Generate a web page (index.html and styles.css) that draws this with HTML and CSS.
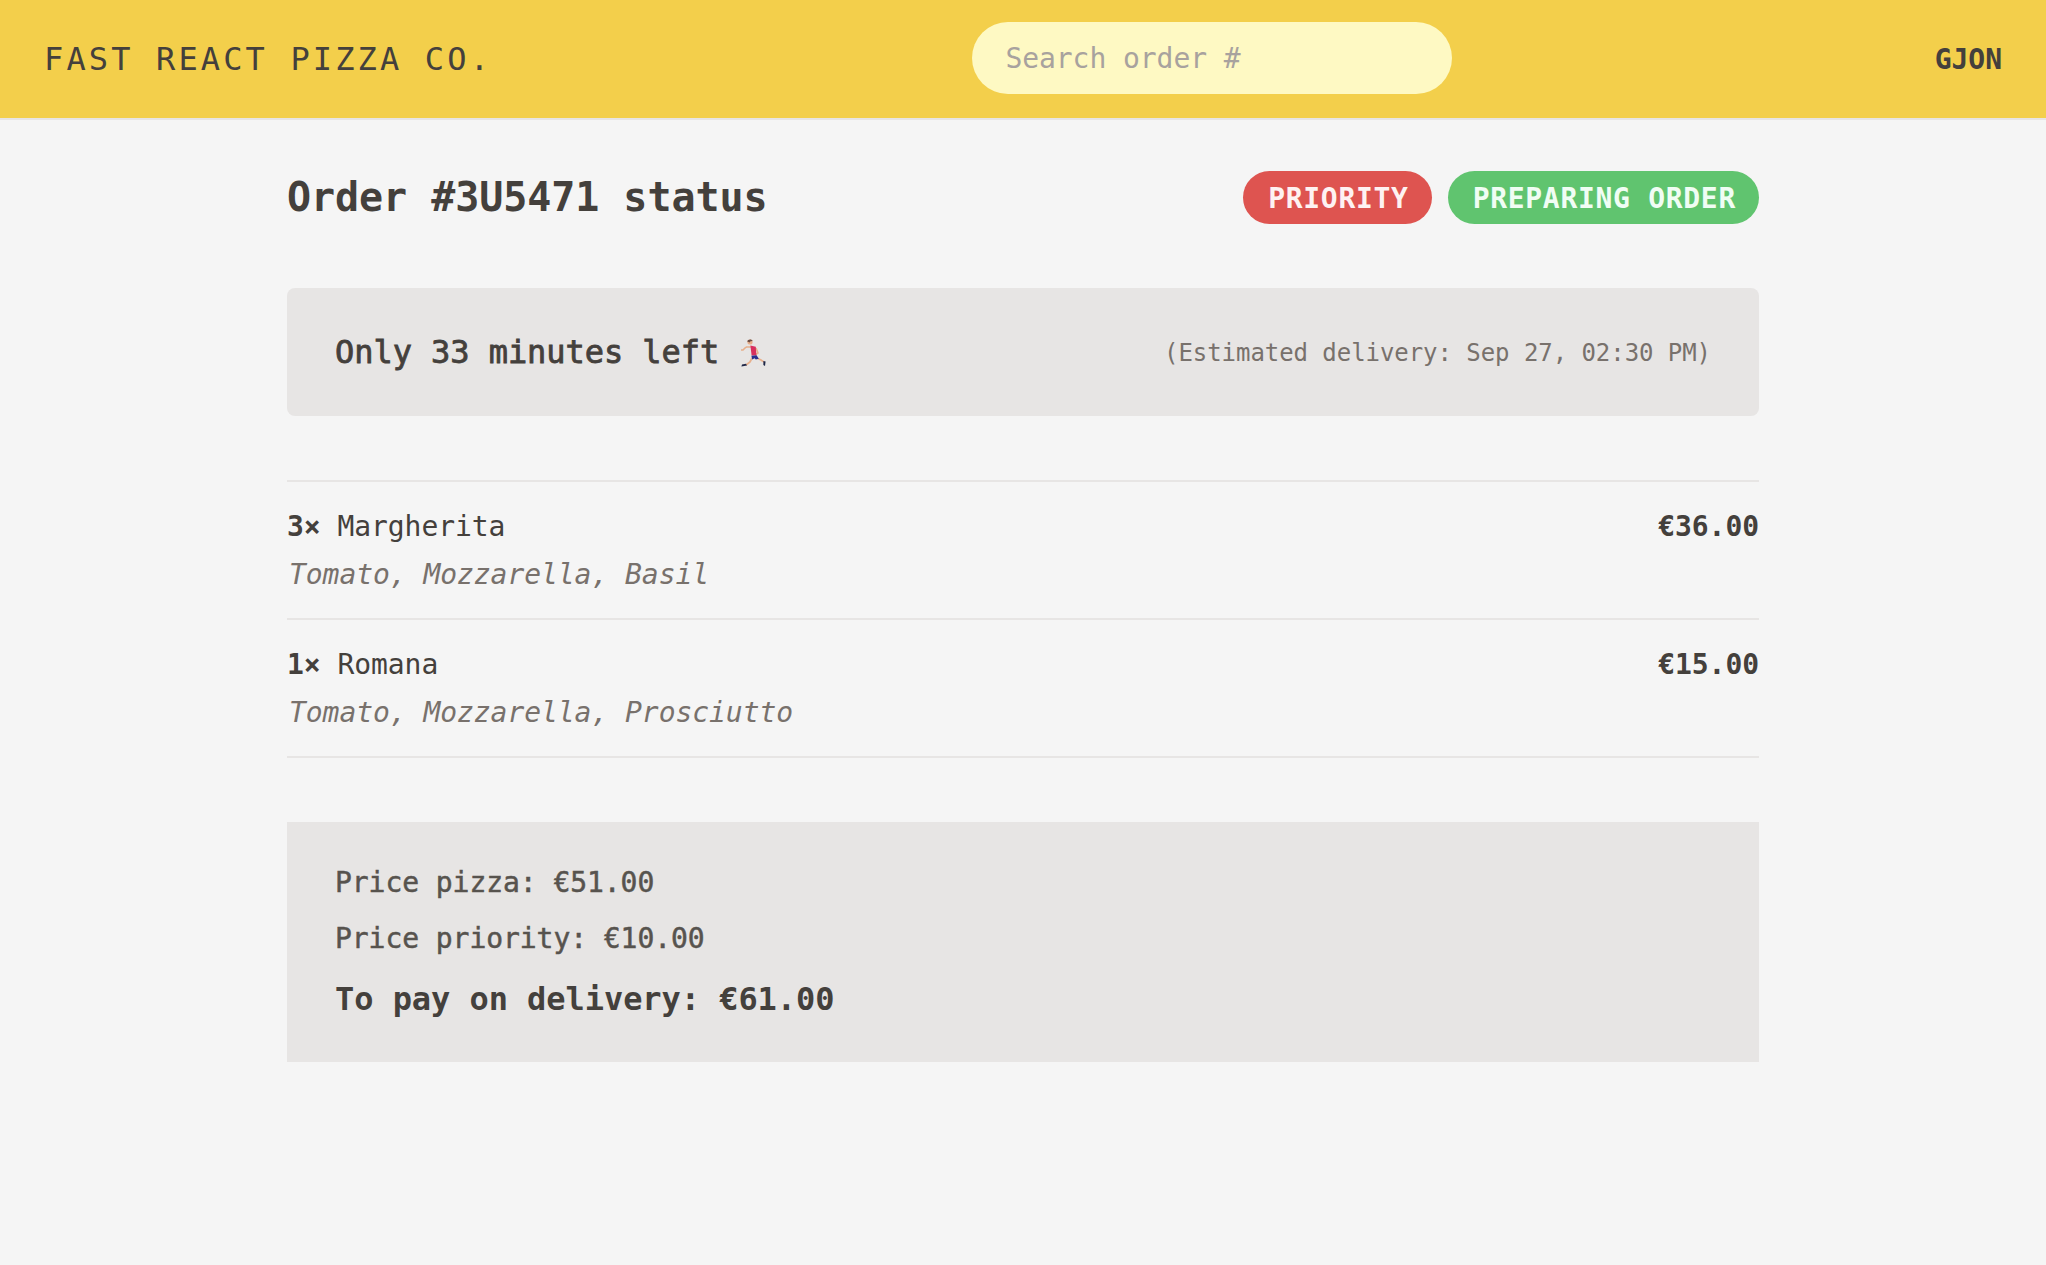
FILE: index.html
```html
<!DOCTYPE html>
<html lang="en">
<head>
    <meta charset="UTF-8">
    <meta name="viewport" content="width=device-width, initial-scale=1.0">
    <title>Fast React Pizza Co.</title>
    <link rel="stylesheet" href="styles.css">
</head>
<body>
    <header class="header">
        <a class="logo" href="#">Fast React Pizza Co.</a>
        <input class="search" type="text" placeholder="Search order #">
        <span class="username">Gjon</span>
    </header>

    <main class="order">
        <div class="order-title">
            <h2>Order #3U5471 status</h2>
            <div class="badges">
                <span class="badge badge-red">Priority</span>
                <span class="badge badge-green">Preparing order</span>
            </div>
        </div>

        <div class="panel eta">
            <p class="eta-left">Only 33 minutes left
                <svg class="runner" viewBox="0 0 28 30" aria-hidden="true">
                    <path d="M8 9l-3 3-2 0M13 9l-5 0" fill="none" stroke="#e8b08c" stroke-width="1.6"/>
                    <path d="M18 10l2 5-3 2" fill="none" stroke="#e8b08c" stroke-width="1.6"/>
                    <path d="M14 20l-2 4-4 3" fill="none" stroke="#e8b08c" stroke-width="1.8"/>
                    <path d="M19 20l4 2 3 2" fill="none" stroke="#e8b08c" stroke-width="1.6"/>
                    <circle cx="12" cy="4" r="2.6" fill="#e8b08c"/>
                    <path d="M9.2 3.6c.2-2.4 4.6-3.2 5.6-.6l-2.4.2-.6 1.2z" fill="#6d4c41"/>
                    <path d="M12.4 7.6l5.4 1.2.6 8.4-4.8.4z" fill="#d8305f"/>
                    <path d="M13.4 17.8l5.2-.6 2.2 3.6-3 .6-1.2-1.2-2.4 1.4z" fill="#2a2f8f"/>
                    <path d="M4 26.6l4-.8 1 1.8-5.6.8z" fill="#1f2747"/>
                    <path d="M25.4 23l2.2.4-.6 4.6-1.6-1z" fill="#1f2747"/>
                </svg>
            </p>
            <p class="eta-note">(Estimated delivery: Sep 27, 02:30 PM)</p>
        </div>

        <ul class="items">
            <li class="item">
                <div class="item-row">
                    <p class="item-name"><b>3×</b> Margherita</p>
                    <p class="item-price">€36.00</p>
                </div>
                <p class="item-ingredients">Tomato, Mozzarella, Basil</p>
            </li>
            <li class="item">
                <div class="item-row">
                    <p class="item-name"><b>1×</b> Romana</p>
                    <p class="item-price">€15.00</p>
                </div>
                <p class="item-ingredients">Tomato, Mozzarella, Prosciutto</p>
            </li>
        </ul>

        <div class="panel summary">
            <p class="summary-line">Price pizza: €51.00</p>
            <p class="summary-line">Price priority: €10.00</p>
            <p class="summary-total">To pay on delivery: €61.00</p>
        </div>
    </main>
</body>
</html>
```

FILE: styles.css
```css
* {
    box-sizing: border-box;
    margin: 0;
    padding: 0;
}
body {
    font-family: "DejaVu Sans Mono", "Liberation Mono", monospace;
    font-size: 28px;
    line-height: 40px;
    letter-spacing: -0.002em;
    background-color: #f5f5f5;
    color: #44403c;
}
.header {
    display: flex;
    align-items: center;
    justify-content: space-between;
    padding: 22px 44px 24px;
    background-color: #f3cf4b;
    border-bottom: 2px solid #e7e5e4;
}
.logo {
    padding-top: 2px;
    font-size: 32px;
    line-height: 48px;
    letter-spacing: 0.098em;
    text-transform: uppercase;
    text-decoration: none;
    color: #44403c;
}
.search {
    width: 480px;
    height: 72px;
    margin-right: 2px;
    padding: 16px 32px 16px 33px;
    border: none;
    border-radius: 36px;
    background-color: #fef9c3;
    font: inherit;
    letter-spacing: inherit;
    color: #44403c;
}
.search::placeholder {
    color: #a8a29e;
    opacity: 1;
}
.username {
    padding-top: 4px;
    font-weight: 600;
    text-transform: uppercase;
}
.order {
    display: flex;
    flex-direction: column;
    gap: 64px;
    width: 1536px;
    margin: 0 auto;
    padding: 48px 32px;
}
.order-title {
    display: flex;
    align-items: flex-end;
    justify-content: space-between;
}
.order-title h2 {
    padding-top: 2px;
    font-size: 40px;
    line-height: 54px;
    font-weight: 600;
}
.badges {
    display: flex;
    gap: 16px;
}
.badge {
    padding: 8px 23px 5px 25px;
    border-radius: 27px;
    font-weight: 600;
    letter-spacing: 0.025em;
    text-transform: uppercase;
}
.badge-red {
    background-color: #de5450;
    color: #fef2f2;
}
.badge-green {
    background-color: #60c46f;
    color: #f0fdf4;
}
.panel {
    padding: 40px 48px;
    background-color: #e7e5e4;
}
.eta {
    display: flex;
    align-items: center;
    justify-content: space-between;
    border-radius: 8px;
}
.eta-left {
    font-size: 32px;
    line-height: 48px;
    -webkit-text-stroke: 0.8px #44403c;
}
.runner {
    width: 28px;
    height: 30px;
    vertical-align: -5px;
}
.eta-note {
    padding-top: 2px;
    font-size: 24px;
    line-height: 32px;
    color: #78716c;
}
.items {
    list-style: none;
    border-top: 2px solid #e7e5e4;
    border-bottom: 2px solid #e7e5e4;
}
.item {
    padding: 25px 0 23px;
}
.item + .item {
    border-top: 2px solid #e7e5e4;
}
.item-row {
    display: flex;
    justify-content: space-between;
    margin-bottom: 8px;
}
.item-price {
    font-weight: 700;
}
.item-ingredients {
    padding-left: 2px;
    font-style: italic;
    color: #78716c;
}
.summary {
    display: flex;
    flex-direction: column;
    gap: 16px;
    padding-top: 41px;
    padding-bottom: 39px;
}
.summary-line {
    color: #57534e;
    -webkit-text-stroke: 0.5px #57534e;
}
.summary-total {
    font-size: 32px;
    line-height: 48px;
    font-weight: 700;
}
```
